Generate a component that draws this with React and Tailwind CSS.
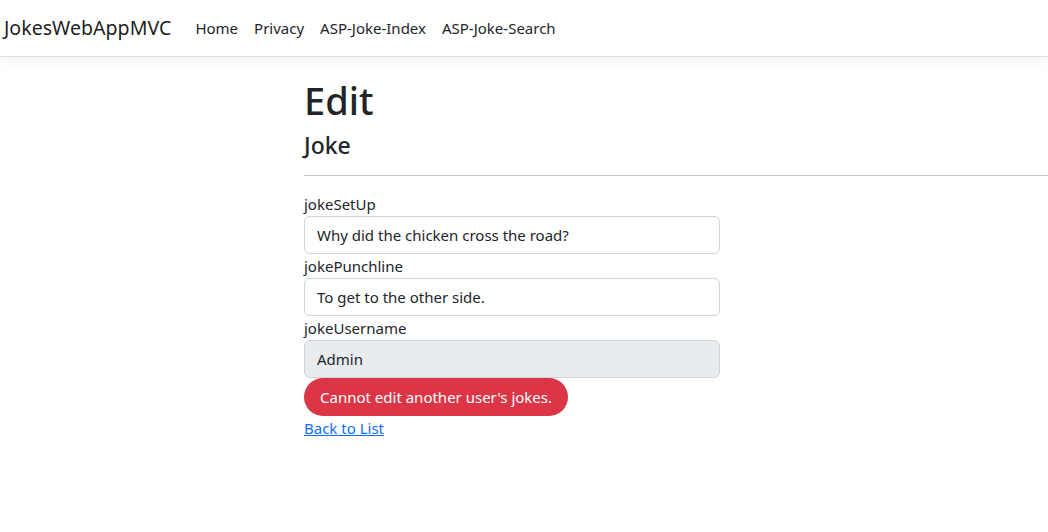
export default function App() {
  const nav = ["Home", "Privacy", "ASP-Joke-Index", "ASP-Joke-Search"];

  // form rows, last one is readonly
  const fields = [
    { label: "jokeSetUp", value: "Why did the chicken cross the road?" },
    { label: "jokePunchline", value: "To get to the other side." },
    { label: "jokeUsername", value: "Admin", readOnly: true },
  ];

  return (
    <div className="min-h-[532px] bg-white text-[#212529] font-['Noto_Sans',sans-serif] overflow-hidden">
      <header className="h-[57px] border-b border-[#dee2e6] shadow-[0_4px_12px_rgba(0,0,0,0.05)] flex items-center">
        <a className="ml-[4px] mr-[16px] text-[19.6px] leading-[30px] text-[rgba(0,0,0,0.9)]">
          JokesWebAppMVC
        </a>
        <nav className="flex items-center text-[15px] leading-[24px]">
          {nav.map((item) => (
            <a key={item} className="px-[8px] text-[#212529]">
              {item}
            </a>
          ))}
        </nav>
      </header>

      <main className="pl-[304px] pt-[19px]">
        <h1 className="text-[38px] leading-[48px] font-medium">Edit</h1>
        <h4 className="mt-[7px] text-[23px] leading-[28px] font-medium">Joke</h4>
        <hr className="mt-[16px] border-0 border-t border-[#c8c8c8]" />

        <div className="w-[416px] mt-[16px] text-[15px] leading-[24px]">
          {fields.map((f) => (
            <div key={f.label}>
              <label className="block">{f.label}</label>
              <div
                className={`h-[38px] border border-[#ced4da] rounded-[6px] px-[12px] flex items-center ${
                  f.readOnly ? "bg-[#e9ecef]" : "bg-white"
                }`}
              >
                {f.value}
              </div>
            </div>
          ))}
          <button className="h-[38px] px-[16px] rounded-full bg-[#dc3545] text-white">
            Cannot edit another user's jokes.
          </button>
          <div>
            <a className="text-[#0d6efd] underline">Back to List</a>
          </div>
        </div>
      </main>
    </div>
  );
}
